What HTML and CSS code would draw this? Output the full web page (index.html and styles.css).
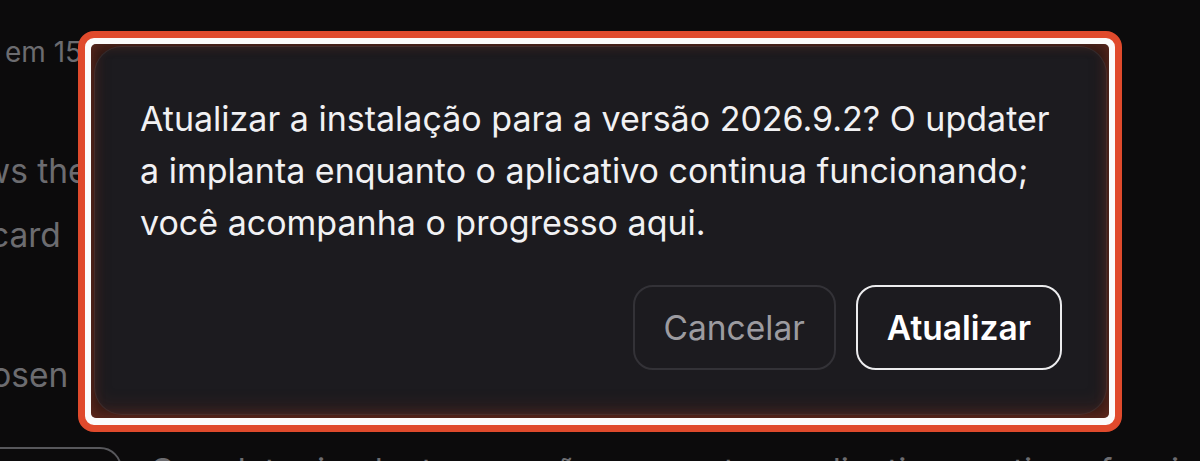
FILE: index.html
```html
<!DOCTYPE html>
<html lang="pt-BR">
<head>
<meta charset="utf-8">
<title>Atualizar instalação</title>
<link rel="stylesheet" href="styles.css">
</head>
<body>
<div class="page">
  <p class="bg-line line-1">em 15 de setembro de 2026 às 14:32</p>
  <p class="bg-line line-2">Shows the latest release available for this install.</p>
  <p class="bg-line line-3">Discard</p>
  <p class="bg-line line-4">Chosen</p>
  <div class="bg-row">
    <span class="bg-button">Atualizar</span>
    <span class="bg-text">O updater implanta a versão enquanto o aplicativo continua funcionando.</span>
  </div>
</div>

<div class="highlight">
  <div class="frame">
    <div class="dialog" role="dialog" aria-modal="true">
      <p class="dialog-text">Atualizar a instalação para a versão 2026.9.2? O updater a implanta enquanto o aplicativo continua funcionando; você acompanha o progresso aqui.</p>
      <div class="actions">
        <button class="btn btn-cancel" type="button">Cancelar</button>
        <button class="btn btn-primary" type="button">Atualizar</button>
      </div>
    </div>
  </div>
</div>
</body>
</html>
```
FILE: styles.css
```css
html, body {
  margin: 0;
  padding: 0;
}
body {
  width: 1200px;
  height: 461px;
  overflow: hidden;
  background: #0c0b0c;
  font-family: Inter, "Noto Sans", "Liberation Sans", sans-serif;
  position: relative;
}

.page {
  display: flex;
  flex-direction: column;
  height: 461px;
  overflow: hidden;
  padding-top: 32px;
  box-sizing: border-box;
  color: #6c6c70;
  font-size: 33.5px;
  line-height: 48px;
}
.bg-line {
  margin: 0;
  white-space: nowrap;
}
.line-1 {
  margin-left: 5px;
  font-size: 28px;
  line-height: 40px;
}
.line-2 { margin-top: 75px; margin-left: -78px; }
.line-3 { margin-top: 16px; margin-left: -60px; }
.line-4 { margin-top: 92px; margin-left: -53px; }

.bg-row {
  margin-top: 48px;
  display: flex;
  align-items: flex-start;
  gap: 28px;
  margin-left: -78px;
  flex: none;
}
.bg-button {
  width: 200px;
  height: 84px;
  border: 2px solid #58585c;
  border-radius: 22px;
  box-sizing: border-box;
  color: #6c6c70;
  text-align: center;
  line-height: 80px;
  flex: none;
}
.bg-text {
  white-space: nowrap;
}

/* highlighted modal overlay */
.highlight {
  position: absolute;
  left: 78px;
  top: 31px;
  width: 1044px;
  height: 401px;
  box-sizing: border-box;
  border: 7px solid #e04a2c;
  border-radius: 16px;
  background: #fbfbfb;
  padding: 6px 6px 7px 6px;
}
.frame {
  position: relative;
  height: 100%;
  box-sizing: border-box;
  background: #2c1814;
  border-radius: 5px;
  padding: 2px 2px 3px 3px;
  overflow: hidden;
}
.frame::after {
  content: "";
  position: absolute;
  inset: 0;
  pointer-events: none;
  box-shadow: inset 0 0 14px rgba(170, 70, 45, 0.35), inset 0 -8px 20px rgba(150, 55, 35, 0.28);
}
.dialog {
  height: 100%;
  box-sizing: border-box;
  background: #1c1b1f;
  border: 1px solid rgba(255, 255, 255, 0.07);
  border-radius: 28px;
  padding: 46px 44px 43px 45px;
  display: flex;
  flex-direction: column;
}
.dialog-text {
  margin: 0;
  color: #f1f1f3;
  font-size: 34px;
  line-height: 52px;
}
.actions {
  margin-top: 36px;
  display: flex;
  justify-content: flex-end;
  gap: 20px;
}
.btn {
  height: 85px;
  box-sizing: border-box;
  padding: 0 29px;
  border-radius: 20px;
  font-family: inherit;
  font-size: 33.5px;
  background: #1c1b1f;
}
.btn-cancel {
  border: 2px solid #333237;
  color: #9c9ba0;
}
.btn-primary {
  border: 2px solid #ececee;
  color: #ffffff;
  font-weight: 600;
}
```
